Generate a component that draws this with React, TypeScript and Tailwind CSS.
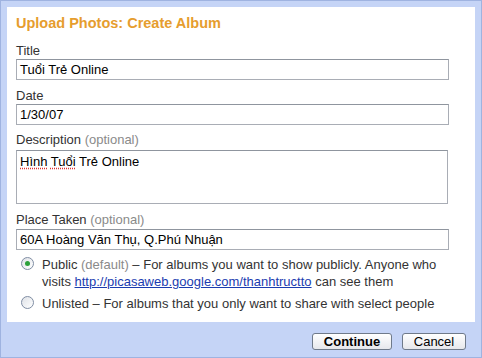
import React from "react";

const Radio = ({ checked }: { checked?: boolean }) => (
  <span className="mt-[1px] flex h-[13px] w-[13px] shrink-0 items-center justify-center rounded-full border border-[#7f8da3] bg-gradient-to-br from-[#dfe2e7] to-white">
    {checked && <span className="h-[5px] w-[5px] rounded-full bg-[#2ca03a]" />}
  </span>
);

const App: React.FC = () => {
  return (
    <div className="h-[358px] w-[482px] border border-[#9fb3e0] bg-[#c5d4f6] font-['Liberation_Sans',Arial,sans-serif] text-[13px] text-[#333]">
      <div className="mx-[6px] mt-[6px] flex h-[315px] flex-col bg-white pl-[9px] pr-[26px] pt-[8px]">
        <span className="text-[14.5px] font-bold leading-[17px] text-[#e69d2e]">
          Upload Photos: Create Album
        </span>

        {/* Title */}
        <span className="mt-[11px] leading-[16px]">Title</span>
        <div className="h-[21px] border border-[#a9adb5] border-t-[#8f959e] bg-white px-[3px] pt-[1px] leading-[18px] text-black">
          Tuổi Trẻ Online
        </div>

        {/* Date */}
        <span className="mt-[8px] leading-[16px]">Date</span>
        <div className="h-[21px] border border-[#a9adb5] border-t-[#8f959e] bg-white px-[3px] pt-[1px] leading-[18px] text-black">
          1/30/07
        </div>

        {/* Description */}
        <span className="mt-[7px] leading-[16px]">
          Description <span className="text-[#8a8a8a]">(optional)</span>
        </span>
        <div className="mr-[1px] mt-[2px] h-[54px] border border-[#a9adb5] border-t-[#8f959e] bg-white px-[3px] pt-[1px] leading-[19px] text-black">
          <span className="underline decoration-[#d33] decoration-dotted underline-offset-2">Hình</span>{" "}
          <span className="underline decoration-[#d33] decoration-dotted underline-offset-2">Tuổi</span> Trẻ Online
        </div>

        {/* Place Taken */}
        <span className="mt-[8px] leading-[16px]">
          Place Taken <span className="text-[#8a8a8a]">(optional)</span>
        </span>
        <div className="mt-[1px] h-[21px] border border-[#a9adb5] border-t-[#8f959e] bg-white px-[3px] pt-[1px] leading-[18px] text-black">
          60A Hoàng Văn Thụ, Q.Phú Nhuận
        </div>

        {/* Privacy */}
        <div className="mt-[6px] flex gap-[8px] pl-[5px] leading-[17px]">
          <Radio checked />
          <p>
            Public <span className="text-[#8a8a8a]">(default)</span> – For albums you want to show publicly. Anyone who
            visits{" "}
            <a className="text-[#1a3cb0] underline">http://picasaweb.google.com/thanhtructto</a> can see them
          </p>
        </div>
        <div className="mt-[5px] flex gap-[8px] pl-[5px] leading-[17px]">
          <Radio />
          <p>Unlisted – For albums that you only want to share with select people</p>
        </div>
      </div>

      <div className="mr-[15px] mt-[11px] flex justify-end gap-[10px]">
        <button className="h-[17px] w-[80px] rounded-[3px] border border-[#6f7a8a] bg-gradient-to-b from-white to-[#e6e8ec] text-[13px] font-bold leading-[15px] text-black">
          Continue
        </button>
        <button className="h-[17px] w-[64px] rounded-[3px] border border-[#6f7a8a] bg-gradient-to-b from-white to-[#e6e8ec] text-[13px] leading-[15px] text-black">
          Cancel
        </button>
      </div>
    </div>
  );
};

export default App;
